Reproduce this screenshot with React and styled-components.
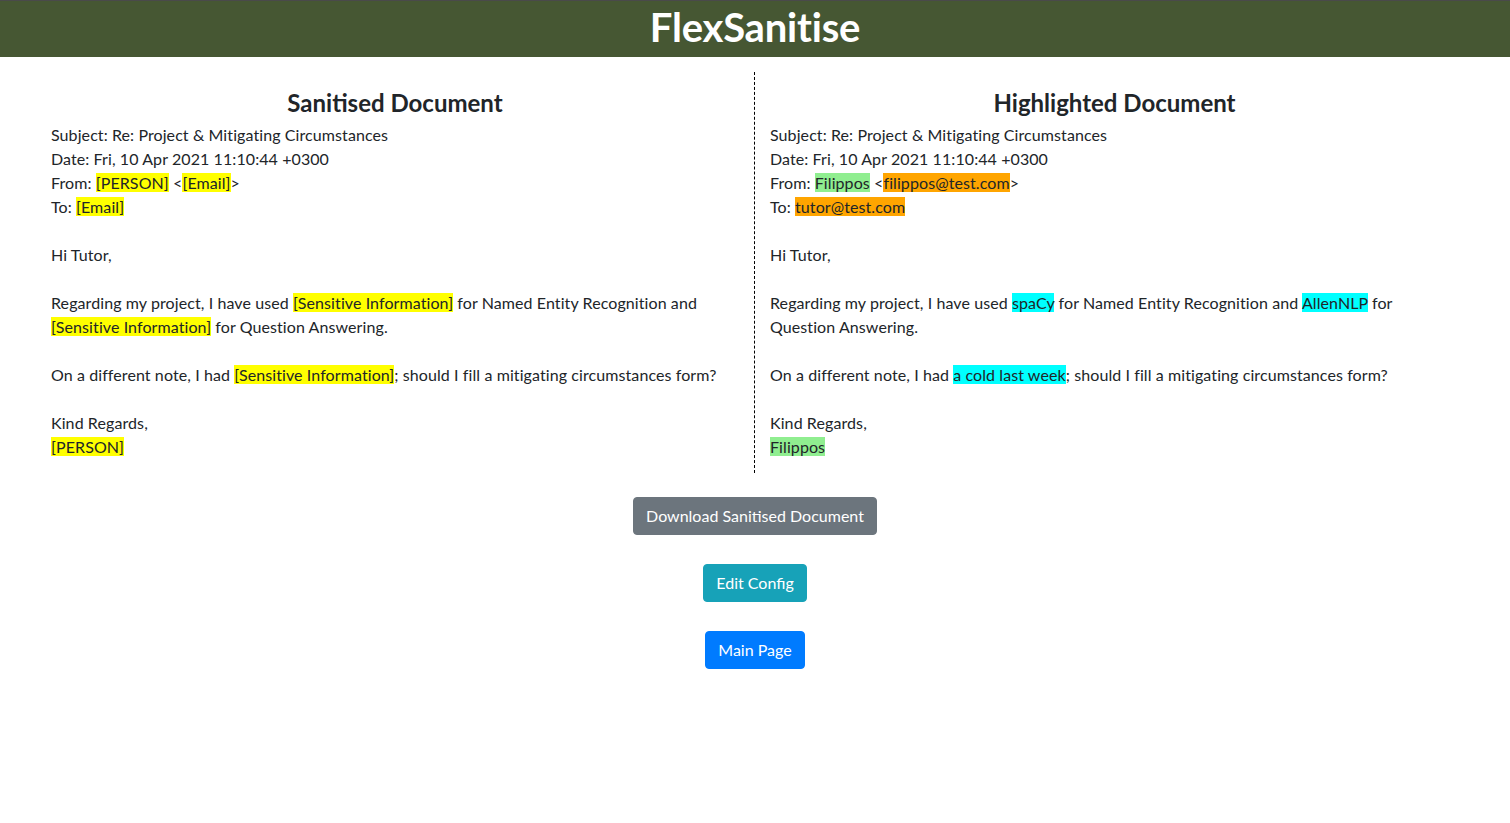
import React from 'react';
import styled, { createGlobalStyle } from 'styled-components';

const GlobalStyle = createGlobalStyle`
    body {
        margin: 0;
        font-family: Lato, "Noto Sans", sans-serif;
        font-size: 16px;
        line-height: 24px;
        letter-spacing: 0.09px;
        color: #212529;
        background: #fff;
    }
`;

const Header = styled.header`
    height: 57px;
    background: #465733;
    border-top: 1px solid #4a4a4a;
    display: flex;
    align-items: center;
    justify-content: center;
    padding-bottom: 4px;
    box-sizing: border-box;
`;

const Title = styled.h1`
    margin: 0;
    color: #fff;
    font-size: 40px;
    font-weight: 700;
    line-height: 48px;
    letter-spacing: -0.2px;
`;

const Columns = styled.div`
    display: grid;
    grid-template-columns: 1fr 1fr;
    padding: 15px 36px 0;
`;

const Column = styled.section`
    padding: 15px 15px 14px;
    border-right: ${(p) => (p.divider ? '1px dashed #000' : 'none')};
`;

const Heading = styled.h3`
    margin: 2px 0 6px;
    text-align: center;
    font-size: 24px;
    font-weight: 700;
    line-height: 28px;
    letter-spacing: 0;
`;

const Line = styled.div`
    min-height: 24px;
`;

const Mark = styled.span`
    background: ${(p) => p.color};
`;

const Actions = styled.div`
    display: flex;
    flex-direction: column;
    align-items: center;
    gap: 29px;
    margin-top: 24px;
`;

const Button = styled.button`
    font-family: inherit;
    font-size: 16px;
    line-height: 24px;
    letter-spacing: 0;
    padding: 6px 12px;
    border: 1px solid ${(p) => p.bg};
    border-radius: 4px;
    background: ${(p) => p.bg};
    color: #fff;
    cursor: pointer;
`;

const YELLOW = '#ffff00';
const GREEN = '#90ee90';
const ORANGE = '#ffa500';
const CYAN = '#00ffff';

const Sanitised = () => (
    <>
        <Line>Subject: Re: Project &amp; Mitigating Circumstances</Line>
        <Line>Date: Fri, 10 Apr 2021 11:10:44 +0300</Line>
        <Line>From: <Mark color={YELLOW}>[PERSON]</Mark> &lt;<Mark color={YELLOW}>[Email]</Mark>&gt;</Line>
        <Line>To: <Mark color={YELLOW}>[Email]</Mark></Line>
        <Line />
        <Line>Hi Tutor,</Line>
        <Line />
        <Line>
            Regarding my project, I have used <Mark color={YELLOW}>[Sensitive Information]</Mark> for Named Entity Recognition and{' '}
            <Mark color={YELLOW}>[Sensitive Information]</Mark> for Question Answering.
        </Line>
        <Line />
        <Line>On a different note, I had <Mark color={YELLOW}>[Sensitive Information]</Mark>; should I fill a mitigating circumstances form?</Line>
        <Line />
        <Line>Kind Regards,</Line>
        <Line><Mark color={YELLOW}>[PERSON]</Mark></Line>
    </>
);

const Highlighted = () => (
    <>
        <Line>Subject: Re: Project &amp; Mitigating Circumstances</Line>
        <Line>Date: Fri, 10 Apr 2021 11:10:44 +0300</Line>
        <Line>From: <Mark color={GREEN}>Filippos</Mark> &lt;<Mark color={ORANGE}>filippos@test.com</Mark>&gt;</Line>
        <Line>To: <Mark color={ORANGE}>tutor@test.com</Mark></Line>
        <Line />
        <Line>Hi Tutor,</Line>
        <Line />
        <Line>
            Regarding my project, I have used <Mark color={CYAN}>spaCy</Mark> for Named Entity Recognition and <Mark color={CYAN}>AllenNLP</Mark> for
            Question Answering.
        </Line>
        <Line />
        <Line>On a different note, I had <Mark color={CYAN}>a cold last week</Mark>; should I fill a mitigating circumstances form?</Line>
        <Line />
        <Line>Kind Regards,</Line>
        <Line><Mark color={GREEN}>Filippos</Mark></Line>
    </>
);

const App = () => {
    return (
        <>
            <GlobalStyle />
            <Header>
                <Title>FlexSanitise</Title>
            </Header>
            <Columns>
                <Column divider>
                    <Heading>Sanitised Document</Heading>
                    <Sanitised />
                </Column>
                <Column>
                    <Heading>Highlighted Document</Heading>
                    <Highlighted />
                </Column>
            </Columns>
            <Actions>
                <Button bg="#6c757d">Download Sanitised Document</Button>
                <Button bg="#17a2b8">Edit Config</Button>
                <Button bg="#007bff">Main Page</Button>
            </Actions>
        </>
    );
};

export default App;
